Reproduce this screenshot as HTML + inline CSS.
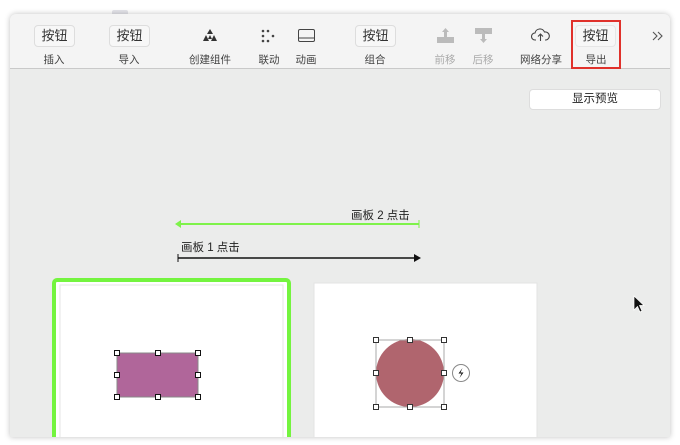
<!DOCTYPE html>
<html><head><meta charset="utf-8"><style>
*{margin:0;padding:0;box-sizing:border-box}
body{width:680px;height:445px;background:#fff;position:relative;overflow:hidden;font-family:"Liberation Sans","Noto Sans CJK SC",sans-serif}
.win{position:absolute;left:10px;top:14px;width:660px;height:423px;background:#ebeceb;border-radius:6px 6px 0 0;box-shadow:0 0 6px rgba(0,0,0,.25);overflow:hidden}
.tb{position:absolute;left:0;top:0;width:660px;height:55px;background:#f4f4f4;border-bottom:1px solid #c9c9c9}
.btn{position:absolute;top:11px;height:22px;border:1px solid #ddd;border-radius:4px;background:#f7f7f7;font-size:13px;color:#333;text-align:center;line-height:20px}
.lab{position:absolute;top:38px;font-size:10.5px;color:#444;transform:translateX(-50%);white-space:nowrap}
.g{color:#aaa}
.abs{position:absolute}
</style></head><body>
<div class="abs" style="left:112px;top:10px;width:16px;height:5px;background:#e4e4ea;border-radius:2px 2px 0 0"></div>
<div class="win">
<div class="tb">
 <div class="btn" style="left:24px;width:41px">按钮</div><div class="lab" style="left:44px">插入</div>
 <div class="btn" style="left:99px;width:41px">按钮</div><div class="lab" style="left:119px">导入</div>
 <svg class="abs" style="left:192px;top:15px" width="16" height="14"><polygon points="8,0 11,5 5,5" fill="#333"/><polygon points="4,6 7,12 1,12" fill="#333"/><polygon points="12,6 15,12 9,12" fill="#333"/><polygon points="8,6 10,10 6,10" fill="#333"/></svg>
 <div class="lab" style="left:200px">创建组件</div>
 <svg class="abs" style="left:251px;top:15px" width="14" height="14" fill="#444"><circle cx="2" cy="2" r="1.3"/><circle cx="7" cy="2" r="1.3"/><circle cx="12" cy="7" r="1.3"/><circle cx="2" cy="7" r="1.3"/><circle cx="2" cy="12" r="1.3"/><circle cx="7" cy="12" r="1.3"/></svg>
 <div class="lab" style="left:259px">联动</div>
 <svg class="abs" style="left:288px;top:15px" width="17" height="13"><rect x=".5" y=".5" width="16" height="12" rx="1.5" fill="none" stroke="#444"/><line x1="1" y1="9" x2="16" y2="9" stroke="#444"/></svg>
 <div class="lab" style="left:296px">动画</div>
 <div class="btn" style="left:345px;width:41px">按钮</div><div class="lab" style="left:365px">组合</div>
 <svg class="abs" style="left:427px;top:14px" width="17" height="15" fill="#bbb"><rect x="0" y="9" width="17" height="6"/><path d="M8.5 0 L12 4 H10 V9 H7 V4 H5Z"/></svg>
 <div class="lab g" style="left:435px">前移</div>
 <svg class="abs" style="left:465px;top:14px" width="17" height="15" fill="#bbb"><rect x="0" y="0" width="17" height="6"/><path d="M8.5 15 L12 11 H10 V6 H7 V11 H5Z"/></svg>
 <div class="lab g" style="left:473px">后移</div>
 <svg class="abs" style="left:521px;top:14px" width="19" height="14" fill="none" stroke="#444" stroke-width="1.1"><path d="M5 12 H4 A3.5 3.5 0 0 1 4 5 A5 5 0 0 1 13.5 4 A4 4 0 0 1 15 12 H14"/><path d="M9.5 13 V6 M7 8.5 L9.5 6 L12 8.5"/></svg>
 <div class="lab" style="left:531px">网络分享</div>
 <div class="btn" style="left:565px;width:41px;border-color:#e6e6e6">按钮</div><div class="lab" style="left:586px">导出</div>
 <div class="abs" style="left:561px;top:6px;width:50px;height:49px;border:2px solid #e0312b"></div>
 <svg class="abs" style="left:642px;top:17px" width="12" height="10" fill="none" stroke="#555" stroke-width="1.1"><path d="M1 1 L5 5 L1 9 M6 1 L10 5 L6 9"/></svg>
</div>
<div class="abs" style="left:519px;top:75px;width:132px;height:21px;background:#fff;border:1px solid #ddd;border-radius:4px;font-size:11.5px;text-align:center;line-height:19px;color:#222">显示预览</div>
<div class="abs" style="left:341px;top:193px;font-size:11.5px;color:#222">画板 2 点击</div>
<div class="abs" style="left:171px;top:225px;font-size:11.5px;color:#222">画板 1 点击</div>
<svg class="abs" style="left:0;top:0" width="660" height="423">
 <line x1="167" y1="210" x2="409" y2="210" stroke="#7ef24a" stroke-width="2"/><polygon points="165,210 171,206 171,214" fill="#7ef24a"/><line x1="409" y1="206" x2="409" y2="214" stroke="#7ef24a"/>
 <line x1="168" y1="244" x2="404" y2="244" stroke="#111" stroke-width="1.6"/><polygon points="411,244 404,240 404,248" fill="#111"/><line x1="168" y1="240" x2="168" y2="248" stroke="#111"/>
 <rect x="44" y="266" width="235" height="170" rx="3" fill="#fff" stroke="#74f43f" stroke-width="4"/>
 <rect x="50" y="271" width="223" height="160" fill="#fff" stroke="#e6e6e6"/>
 <rect x="304" y="269" width="223" height="160" fill="#fff" stroke="#e3e3e3"/>
 <rect x="107" y="339" width="81" height="44" fill="#b0669a" stroke="#888"/>
 <g fill="#fff" stroke="#111" stroke-width="1"><rect x="104.5" y="336.5" width="5" height="5"/><rect x="145.5" y="336.5" width="5" height="5"/><rect x="185.5" y="336.5" width="5" height="5"/><rect x="104.5" y="358.5" width="5" height="5"/><rect x="185.5" y="358.5" width="5" height="5"/><rect x="104.5" y="380.5" width="5" height="5"/><rect x="145.5" y="380.5" width="5" height="5"/><rect x="185.5" y="380.5" width="5" height="5"/></g>
 <circle cx="400" cy="359" r="34" fill="#b0656e"/>
 <rect x="366" y="326" width="68" height="67" fill="none" stroke="#aaa"/>
 <g fill="#fff" stroke="#333"><rect x="363.5" y="323.5" width="5" height="5"/><rect x="397.5" y="323.5" width="5" height="5"/><rect x="431.5" y="323.5" width="5" height="5"/><rect x="363.5" y="356.5" width="5" height="5"/><rect x="431.5" y="356.5" width="5" height="5"/><rect x="363.5" y="390.5" width="5" height="5"/><rect x="397.5" y="390.5" width="5" height="5"/><rect x="431.5" y="390.5" width="5" height="5"/></g>
 <circle cx="451" cy="359" r="8.5" fill="#fff" stroke="#888"/><path d="M452.5 354 L448.5 359.5 H451.5 L449.5 364 L453.5 358.5 H450.5Z" fill="#111"/>
 <path d="M624 282 V296 L627.5 292.5 L630 298 L632 297 L629.5 291.5 H634Z" fill="#111" stroke="#fff" stroke-width=".7"/>
</svg>
</div>
</body></html>
